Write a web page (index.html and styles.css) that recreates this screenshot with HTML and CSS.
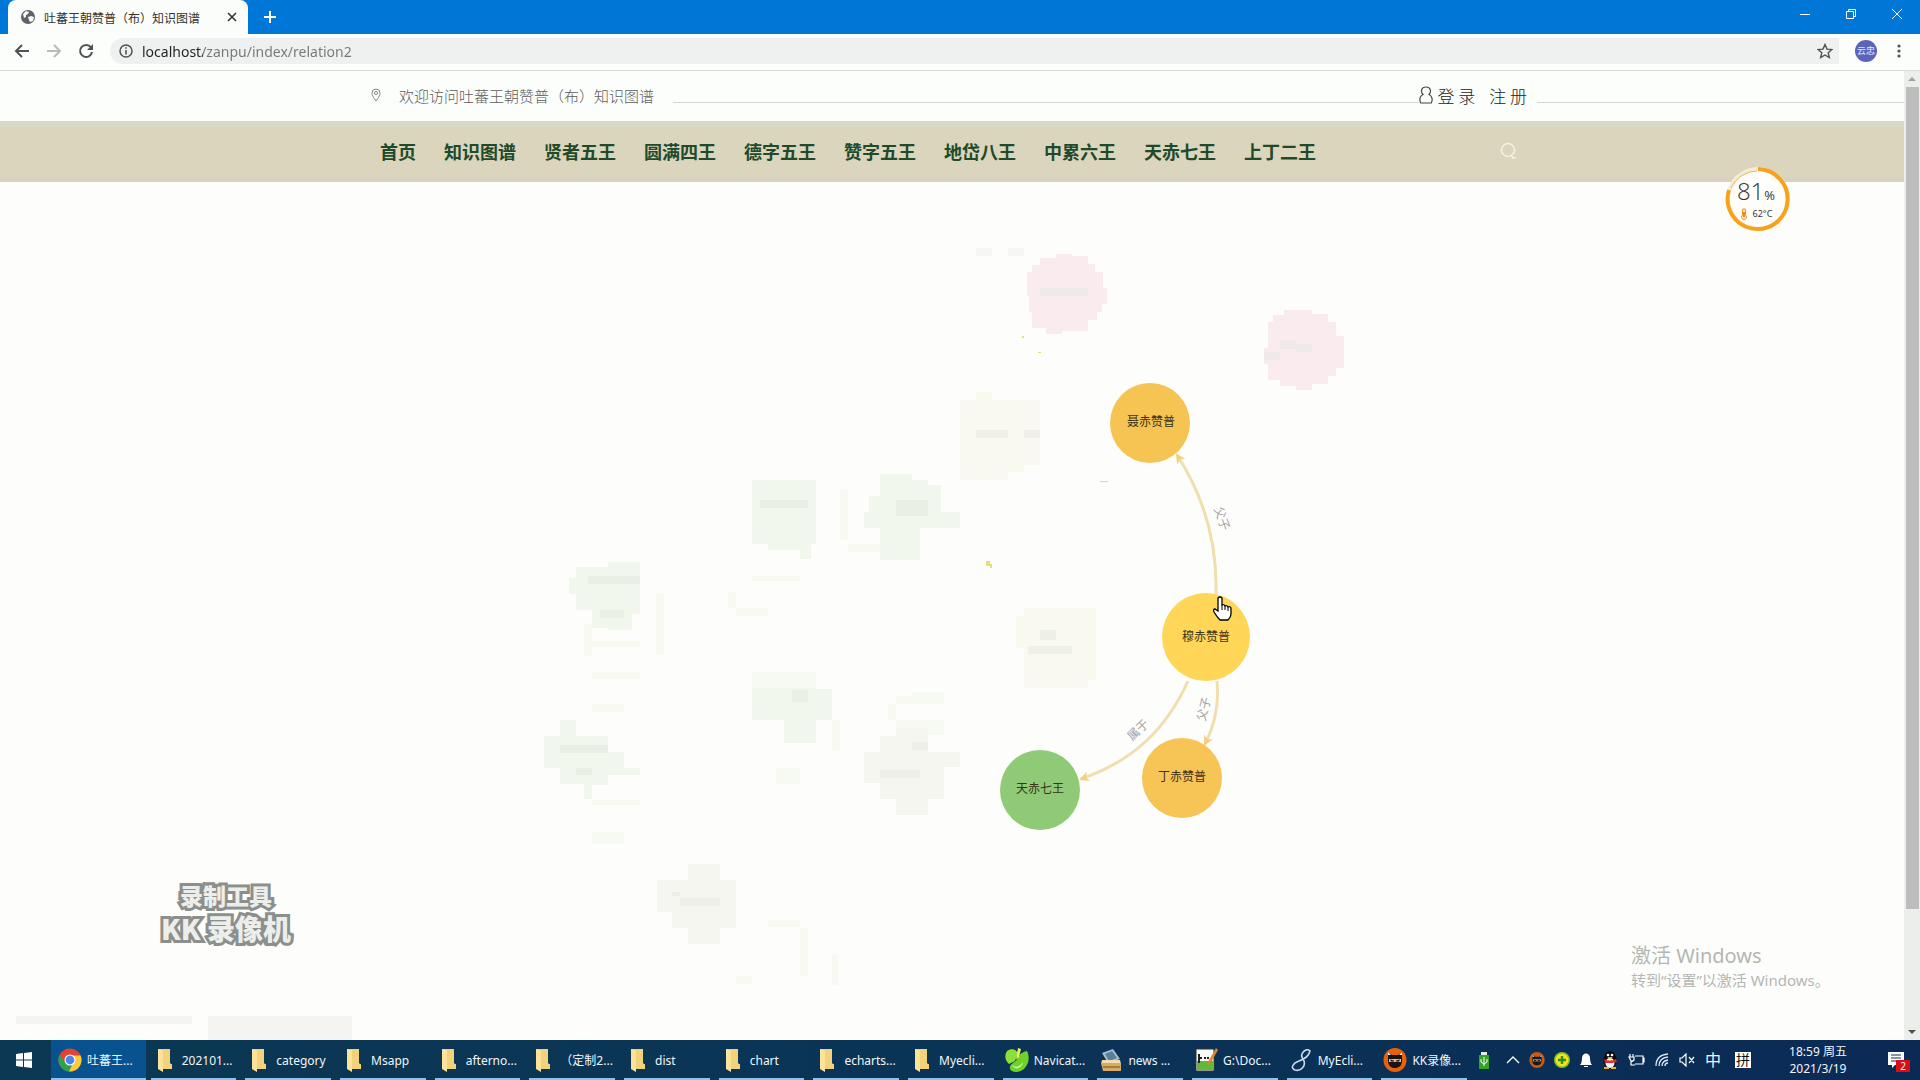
FILE: index.html
```html
<!DOCTYPE html>
<html lang="zh-CN">
<head>
<meta charset="utf-8">
<title>吐蕃王朝赞普（布）知识图谱</title>
<link rel="stylesheet" href="styles.css">
</head>
<body>
<svg class="defs" aria-hidden="true">
  <symbol id="folder" viewBox="0 0 24 24"><path d="M5 1h12v15h2v5H8l-3-2z" fill="#e9c35b"/><path d="M5 1l5 1v22l-5-3z" fill="#fbe49a"/><path d="M10 1h7v14l2 2v4h-9z" fill="#f2d27a"/></symbol>
  <symbol id="ninja" viewBox="0 0 24 24"><ellipse cx="12" cy="12" rx="11.500" ry="12" fill="#e8620c"/><path d="M5 4l4 3h6l4-3v8c0 6-3 8-7 8s-7-2-7-8z" fill="#191411"/><path d="M6 11h12v3H6z" fill="#f2b98c"/><path d="M7 11.500l4 1v1H8zM17 11.500l-4 1v1h3z" fill="#111"/><path d="M5 4l3 3H5zM19 4l-3 3h3z" fill="#fff"/></symbol>
</svg>
<div class="desktop">
  <main class="browser">
    <header class="tabstrip">
      <div class="tab">
        <svg width="16" height="16" viewBox="0 0 16 16"><circle cx="8" cy="8" r="7" fill="#5f6368"/><path d="M3 5l3-3 3 1-1 2-2 1v2l-2 1zM8 8l3-1 3 1-1 4-3 1-1-2z" fill="#fafcfa"/></svg>
        <span class="tab-title">吐蕃王朝赞普（布）知识图谱</span>
        <button class="bare" aria-label="关闭标签页"><svg width="10" height="10" viewBox="0 0 10 10"><path d="M1 1l8 8M9 1l-8 8" stroke="#333" stroke-width="1.600"/></svg></button>
      </div>
      <button class="bare new-tab" aria-label="新标签页"><svg width="14" height="14" viewBox="0 0 14 14"><path d="M7 1v12M1 7h12" stroke="#fff" stroke-width="2"/></svg></button>
      <div class="window-buttons">
        <button class="bare" aria-label="最小化"><svg width="12" height="12" viewBox="0 0 12 12"><path d="M1 6.500h10" stroke="#fff"/></svg></button>
        <button class="bare" aria-label="还原"><svg width="12" height="12" viewBox="0 0 12 12"><path d="M1.500 3.500h7v7h-7zM3.500 3.500v-2h7v7h-2" fill="none" stroke="#fff"/></svg></button>
        <button class="bare" aria-label="关闭"><svg width="12" height="12" viewBox="0 0 12 12"><path d="M1 1l10 10M11 1L1 11" stroke="#fff"/></svg></button>
      </div>
    </header>
    <div class="toolbar">
      <button class="bare" aria-label="后退"><svg width="16" height="16" viewBox="0 0 16 16"><path d="M15 8H2M8 2L2 8l6 6" fill="none" stroke="#505356" stroke-width="2"/></svg></button>
      <button class="bare" aria-label="前进"><svg width="16" height="16" viewBox="0 0 16 16"><path d="M1 8h13M8 2l6 6-6 6" fill="none" stroke="#b9bbb9" stroke-width="2"/></svg></button>
      <button class="bare" aria-label="重新加载"><svg width="16" height="16" viewBox="0 0 16 16"><path d="M13 4.500A6 6 0 1 0 14 9" fill="none" stroke="#505356" stroke-width="2"/><path d="M15 1v6H9z" fill="#505356"/></svg></button>
      <div class="omnibox">
        <svg width="16" height="16" viewBox="0 0 16 16"><circle cx="8" cy="8" r="6" fill="none" stroke="#505356" stroke-width="1.500"/><path d="M8 7v4.500M8 4.200v1.600" stroke="#505356" stroke-width="1.600"/></svg>
        <input class="url" type="text" aria-label="地址" value="localhost/zanpu/index/relation2">
        <button class="bare" aria-label="收藏"><svg width="16" height="16" viewBox="0 0 16 16"><path d="M8 1.500l2 4.600 4.900.4-3.700 3.200 1.100 4.800L8 12l-4.300 2.500 1.100-4.800L1.100 6.500 6 6.100z" fill="none" stroke="#505356" stroke-width="1.400"/></svg></button>
      </div>
      <button class="avatar" aria-label="用户">云忠</button>
      <button class="bare" aria-label="菜单"><svg width="4" height="16" viewBox="0 0 4 16"><g fill="#505356"><circle cx="2" cy="3" r="1.600"/><circle cx="2" cy="8" r="1.600"/><circle cx="2" cy="13" r="1.600"/></g></svg></button>
    </div>
    <div class="viewport">
      <div class="page">
        <div class="topbar">
          <div class="welcome">
            <svg width="10" height="14" viewBox="0 0 10 14"><path d="M5 13C2 9 1 7 1 5a4 4 0 0 1 8 0c0 2-1 4-4 8z" fill="none" stroke="#888"/><circle cx="5" cy="5" r="1.600" fill="none" stroke="#888"/></svg>
            <span>欢迎访问吐蕃王朝赞普（布）知识图谱</span>
          </div>
          <div class="rule"></div>
          <div class="account">
            <svg width="14" height="18" viewBox="0 0 14 18"><path d="M4 8.500C1.500 6 2 1 7 1s5.500 5 3 7.500c3.500 1.500 3.800 6 2.200 8.500H1.800C.2 14.500.5 10 4 8.500z" fill="none" stroke="#444" stroke-width="1.200"/></svg>
            <a href="#login">登 录</a>
            <a href="#register">注 册</a>
          </div>
          <div class="rule rule-end"></div>
        </div>
        <nav class="nav">
          <div class="nav-inner">
            <a href="#home">首页</a><a href="#kg">知识图谱</a><a href="#a">贤者五王</a><a href="#b">圆满四王</a><a href="#c">德字五王</a><a href="#d">赞字五王</a><a href="#e">地岱八王</a><a href="#f">中累六王</a><a href="#g">天赤七王</a><a href="#h">上丁二王</a>
            <button class="bare search" aria-label="搜索"><svg width="18" height="18" viewBox="0 0 18 18"><circle cx="9" cy="8" r="6.500" fill="none" stroke="#f6f2e4" stroke-width="1.400"/><path d="M12 13l2 3h3" fill="none" stroke="#f6f2e4" stroke-width="1.600"/></svg></button>
          </div>
        </nav>
        <svg class="chart" viewBox="0 182 1904 858" preserveAspectRatio="xMidYMin meet" role="img" aria-label="人物关系图">
          <defs>
            <marker id="arrow" viewBox="0 0 10 10" refX="8" refY="5" markerWidth="10" markerHeight="10" markerUnits="userSpaceOnUse" orient="auto"><path d="M0 0l10 5-10 5 3-5z" fill="#f3cf7e"/></marker>
          </defs>
          <path d="M16 1016h176v8H16zM208 1016h144v24H208z" fill="#f4f5f2"/>
          <!-- de-emphasised nodes -->
          <g class="faded-green">
            <path d="M752 480h64v64h-5v15h-11v-9h-32v-6h-16zM880 474h32v6h16v5h13v27h19v16h-40v32h-40v-32h-16v-16h5v-16h11zM608 562h32v52h-8v16h-24v-2h-16v-18h-16v-16h-7v-16h7v-11h32zM752 688h64v1h16v31h-16v23h-32v-23h-32zM560 720h16v16h32v16h16v16h16v7h-32v10h-16v14h-8v-15h-24v-16h-16v-32h16z"/>
            <path opacity=".6" d="M752 576h48v5h-48zM736 608h32v8h-32zM592 641h48v6h-48zM656 594h8v60h-8zM592 672h48v7h-48zM592 704h32v8h-32zM592 800h48v5h-48zM592 832h32v12h-32zM848 544h32v8h-32zM776 768h24v16h-24zM840 490h8v50h-8zM752 672h64v16h-64zM832 720h8v30h-8zM584 624h8v32h-8zM728 592h8v16h-8z"/>
          </g>
          <g class="faded-grey">
            <path d="M896 728h32v24h32v15h-16v32h-16v16h-32v-16h-16v-16h-16v-31h16v-16h16zM688 864h32v16h16v48h-16v16h-32v-16h-16v-16h-15v-32h31z"/>
            <path opacity=".7" d="M896 696h16v-4h32v12h-48zM888 704h8v16h-8zM768 920h32v7h-32zM800 928h8v48h-8zM736 976h16v8h-16zM832 954h6v31h-6zM896 720h48v15h-48z"/>
          </g>
          <path class="faded-beige" d="M976 392h16v8h48v65h-16v7h-16v8h-48v-80h16zM1024 608h72v72h-8v8h-64v-40h-8v-32h8z"/>
          <path class="faded-pink" d="M1056 254h16v2h16v8h7v8h8v16h4v16h-5v8h-5v8h-9v11h-26v3h-16v-6h-14v-16h-3v-16h-2v-24h5v-7h8v-7h16zM1296 310h16v4h16v8h8v14h8v32h-8v8h-8v8h-16v6h-16v-4h-16v-6h-12v-16h-4v-16h4v-26h5v-7h11v-5h12z"/>
          <g class="faded-label">
            <path d="M1040 288h48v8h-48zM1280 340h16v4h16v8h-16v-3h-16zM1264 352h16v8h-16zM768 500h40v8h-48v-8zM896 500h32v16h-32zM588 576h52v8h-52zM600 610h24v8h-24zM792 690h16v12h-16zM560 745h48v8h-48zM576 768h16v7h-16zM880 770h40v8h-40zM912 742h16v8h-16zM680 898h40v8h-40zM672 892h8v4h-8zM976 430h32v8h-32zM1024 430h16v8h-16zM1040 630h16v10h-16zM1028 646h44v8h-44z"/>
          </g>
          <path d="M976 248h16v8h-16zM1008 248h16v8h-16z" fill="#f7f6f4"/>
          <g fill="#e9dc72"><path d="M986 561h4v3h2v4h-2v-2h-4zM1100 481h8v1h-8zM1022 336h2v2h-2zM1038 352h3v1h-3z"/></g>
          <!-- relations -->
          <g class="edges">
            <path d="M1216 594Q1218 518 1177 455" marker-end="url(#arrow)"/>
            <path d="M1188 681C1165 732 1130 762 1081 779" marker-end="url(#arrow)"/>
            <path d="M1217 681Q1220 715 1205 744" marker-end="url(#arrow)"/>
          </g>
          <g class="edge-labels">
            <text transform="translate(1218 520) rotate(70)">父子</text>
            <text transform="translate(1141 733) rotate(-44)">属于</text>
            <text transform="translate(1208 710) rotate(-76)">父子</text>
          </g>
          <g class="nodes">
            <circle cx="1150" cy="423" r="40" fill="#f6c453"/><text x="1151" y="426">聂赤赞普</text>
            <circle cx="1206" cy="637" r="44" fill="#ffd658"/><text x="1206" y="641">穆赤赞普</text>
            <circle cx="1182" cy="778" r="40" fill="#f7c456"/><text x="1182" y="781">丁赤赞普</text>
            <circle cx="1040" cy="790" r="40" fill="#8fca76"/><text x="1040" y="793">天赤七王</text>
          </g>
        </svg>
      </div>
      <div class="scrollbar" aria-hidden="true">
        <svg width="8" height="16" viewBox="0 0 8 16"><path d="M0 10l4-4 4 4z" fill="#a0a3a0"/></svg>
        <div class="thumb"></div>
        <svg width="8" height="16" viewBox="0 0 8 16"><path d="M0 6l4 4 4-4z" fill="#505050"/></svg>
      </div>
    </div>
  </main>
  <footer class="taskbar">
    <button class="bare start" aria-label="开始"><svg width="16" height="16" viewBox="0 0 16 16"><path d="M0 2l7-1v6.500H0zM8 1l8-1v7.500H8zM0 8.500h7V15l-7-1zM8 8.500h8V16l-8-1z" fill="#fff"/></svg></button>
    <div class="tasks">
      <button class="task active"><svg viewBox="0 0 24 24"><circle cx="12" cy="12" r="11.500" fill="#e24335"/><path d="M1.500 7A11.500 11.500 0 0 0 11 23.500L16 14l-4 3-5-3z" fill="#2ba24c"/><path d="M11 23.500A11.500 11.500 0 0 0 22.600 7.500H12l4.500 4.500z" fill="#fbcb3a"/><circle cx="12" cy="12" r="5.500" fill="#fff"/><circle cx="12" cy="12" r="4.400" fill="#4a86ee"/></svg><span>吐蕃王...</span></button>
      <button class="task"><svg viewBox="0 0 24 24"><use href="#folder"/></svg><span>202101...</span></button>
      <button class="task"><svg viewBox="0 0 24 24"><use href="#folder"/></svg><span>category</span></button>
      <button class="task"><svg viewBox="0 0 24 24"><use href="#folder"/></svg><span>Msapp</span></button>
      <button class="task"><svg viewBox="0 0 24 24"><use href="#folder"/></svg><span>afterno...</span></button>
      <button class="task"><svg viewBox="0 0 24 24"><use href="#folder"/></svg><span>（定制2...</span></button>
      <button class="task"><svg viewBox="0 0 24 24"><use href="#folder"/></svg><span>dist</span></button>
      <button class="task"><svg viewBox="0 0 24 24"><use href="#folder"/></svg><span>chart</span></button>
      <button class="task"><svg viewBox="0 0 24 24"><use href="#folder"/></svg><span>echarts...</span></button>
      <button class="task"><svg viewBox="0 0 24 24"><use href="#folder"/></svg><span>Myecli...</span></button>
      <button class="task"><svg viewBox="0 0 24 24"><path d="M2 3C6 0 11 1 13 5l-3 8-6 3C-1 12 0 6 2 3z" fill="#8be03a"/><path d="M12 12c2-5 4-8 10-9 3 6 2 13-3 18-5 4-12 4-14 0-1-4 3-6 7-9z" fill="#6dd32a"/><path d="M13 0l3 1-2 8-3 3z" fill="#f2ee5a"/><path d="M7 17c3 3 8 2 11-3-1 6-8 9-11 3z" fill="#d5f9b0"/></svg><span>Navicat...</span></button>
      <button class="task"><svg viewBox="0 0 24 24"><path d="M3 5l11-4 7 10-12 4z" fill="#a9bfcc"/><path d="M6 6l7-3 5 7-8 3z" fill="#587f9b"/><path d="M3 12h18l1 4H2z" fill="#f2dcb0"/><path d="M2 15h20v8H4z" fill="#d6ab67"/><path d="M4 18h17v2H4z" fill="#a87b3d"/></svg><span>news ...</span></button>
      <button class="task"><svg viewBox="0 0 24 24"><path d="M2 1h18v22H2z" fill="#f8faf5" stroke="#333"/><path d="M3 13h16v9H3z" fill="#5eba32"/><path d="M5 6v9M5 10h3M10 10h2M13 10h2" stroke="#222" stroke-width="2"/><path d="M22 0l2 2-8 14-3 2 1-4z" fill="#d58a2c"/></svg><span>G:\Doc...</span></button>
      <button class="task"><svg viewBox="0 0 24 24"><path d="M21 3C17-1 10 6 14 11c4 6-2 13-8 11-5-2-2-7 4-9s10-6 11-10z" fill="none" stroke="#c8daf0" stroke-width="1.600"/></svg><span>MyEcli...</span></button>
      <button class="task"><svg viewBox="0 0 24 24"><use href="#ninja"/></svg><span>KK录像...</span></button>
    </div>
    <div class="tray">
      <svg width="10" height="18" viewBox="0 0 10 18"><path d="M2 1h6v4H2z" fill="#e8ece8"/><path d="M0 4h10v14H0z" fill="#35a326"/><path d="M5 6v9M2 8v3l3 2 3-2V8" fill="none" stroke="#fff"/></svg>
      <svg width="14" height="16" viewBox="0 0 14 16"><path d="M1 11l6-6 6 6" fill="none" stroke="#fff" stroke-width="1.400"/></svg>
      <svg width="16" height="16" viewBox="0 0 24 24"><use href="#ninja" opacity=".85"/></svg>
      <svg width="16" height="16" viewBox="0 0 16 16"><circle cx="8" cy="8" r="8" fill="#7cc22b"/><circle cx="8" cy="8" r="6.500" fill="#f5e11c"/><path d="M8 4v8M4 8h8" stroke="#2c8f1c" stroke-width="2.400"/></svg>
      <svg width="14" height="16" viewBox="0 0 14 16"><path d="M1 13q2-2 2-7c0-6 8-6 8 0q0 5 2 7zM5 14h4v1H5z" fill="#fff"/></svg>
      <svg width="16" height="18" viewBox="0 0 16 18"><ellipse cx="8" cy="9" rx="6.500" ry="9" fill="#0a0a0a"/><ellipse cx="8" cy="12" rx="4.500" ry="5" fill="#fff"/><path d="M2 8q6 3 12 0l1 3-5 1H3z" fill="#e22b28"/><circle cx="6" cy="4" r="1.300" fill="#fff"/><circle cx="10" cy="4" r="1.300" fill="#fff"/><path d="M5 6h6l-3 2zM2 16h5v2H2zM9 16h5v2H9z" fill="#f3b020"/></svg>
      <svg width="18" height="14" viewBox="0 0 18 14"><path d="M8 3h8v8H8M16 5h1v4h-1M3 1v3M6 1v3M2 4h5v3q-2 2-3 1zM4 8v4h4" fill="none" stroke="#fff" stroke-width="1.200"/></svg>
      <svg width="16" height="16" viewBox="0 0 16 16"><path d="M2 14Q2 3 14 2M5 14q0-8 9-9M8 14q0-5 6-6M11 14q0-3 3-3" fill="none" stroke="#dfe8f2" stroke-width="1.300"/></svg>
      <svg width="16" height="14" viewBox="0 0 16 14"><path d="M1 5h2l4-4v12L3 9H1zM10 4l5 6M15 4l-5 6" fill="none" stroke="#fff" stroke-width="1.200"/></svg>
      <span class="ime">中</span>
      <span class="ime ime-box">拼</span>
    </div>
    <div class="clock"><span>18:59 周五</span><span>2021/3/19</span></div>
    <button class="bare notice" aria-label="通知"><svg width="16" height="18" viewBox="0 0 16 18"><path d="M0 1h16v13H7l-3 3v-3H0z" fill="#fff"/><path d="M3 4h10M3 7h10M3 10h7" stroke="#0b2c56"/></svg><span class="count">2</span></button>
  </footer>
  <div class="recorder">
    <span class="recorder-top">录制工具</span>
    <span class="recorder-name">KK 录像机</span>
  </div>
  <div class="activate"><span class="activate-title">激活 Windows</span><span>转到“设置”以激活 Windows。</span></div>
  <div class="monitor">
    <svg class="ring" width="66" height="66" viewBox="0 0 66 66"><circle cx="33" cy="33" r="32" fill="#f6ecd6"/><circle cx="33" cy="33" r="28" fill="#fffefa"/><path d="M33 3A30 30 0 1 1 4 24" fill="none" stroke="#f7a21c" stroke-width="4"/><path d="M6 22A29 29 0 0 1 32 5" fill="none" stroke="#e5b95c"/></svg>
    <div class="load">81<small>%</small></div>
    <div class="temp"><svg width="8" height="12" viewBox="0 0 8 12"><path d="M2.500 1h3v6a2.500 2.500 0 1 1-3 0z" fill="#fde3b5" stroke="#f39a1e"/><path d="M4 4v5" stroke="#f06a10" stroke-width="1.600"/></svg>62°C</div>
  </div>
  <svg class="cursor" width="20" height="26" viewBox="0 0 20 26"><path d="M6 2q2-2 4 0v7q2-1 3 1 2-1 3 1 2-1 3 1v6q0 3-3 6H8q-3-3-6-8-1-3 1-3l3 2z" fill="#fff" stroke="#000" stroke-width="1.300"/><path d="M10 9v5M13 10v4M16 11v4" stroke="#000"/></svg>
</div>
</body>
</html>
```
FILE: styles.css
```css
* { box-sizing: border-box; }
body {
  margin: 0;
  font-family: "Noto Sans", "Noto Sans CJK SC", sans-serif;
  font-size: 12px;
  color: #333;
}
a { color: inherit; text-decoration: none; }
svg { display: block; flex: none; }
button, input { font: inherit; color: inherit; }
.defs { position: absolute; width: 0; height: 0; }
.bare {
  display: flex;
  align-items: center;
  justify-content: center;
  padding: 0;
  border: 0;
  background: none;
}
.desktop {
  position: relative;
  display: flex;
  flex-direction: column;
  min-height: 100vh;
  overflow: hidden;
}
.browser { flex: 1; display: flex; flex-direction: column; background: #fcfefb; }

/* browser frame */
.tabstrip { display: flex; height: 34px; background: #0076d6; padding-left: 8px; }
.tab {
  display: flex;
  align-items: center;
  gap: 8px;
  width: 240px;
  padding: 0 11px 0 12px;
  border-radius: 8px 8px 0 0;
  background: #fbfdfa;
}
.tab-title { flex: 1; white-space: nowrap; font-family: "Noto Sans CJK SC", sans-serif; }
.new-tab { width: 44px; }
.window-buttons { display: flex; margin-left: auto; height: 28px; }
.window-buttons .bare { width: 46px; }
.toolbar {
  display: flex;
  align-items: center;
  gap: 16px;
  height: 37px;
  padding: 0 19px 2px 14px;
  border-bottom: 1px solid #d9dbd9;
}
.omnibox {
  flex: 1;
  display: flex;
  align-items: center;
  gap: 8px;
  height: 26px;
  padding: 0 6px 0 8px;
  border-radius: 13px 0 0 13px;
  background: #eef1ef;
}
.url {
  flex: 1;
  height: 24px;
  padding: 0;
  border: 0;
  outline: 0;
  font-size: 14px;
  color: transparent;
  background: linear-gradient(to right, #222 61px, #74777a 61px);
  background-clip: text;
}
.avatar {
  width: 22px;
  height: 22px;
  margin-right: 4px;
  padding: 0;
  border: 0;
  border-radius: 50%;
  background: #5b64ba;
  color: #e8e9ff;
  font-size: 9px;
  line-height: 22px;
}

/* page */
.viewport { flex: 1; display: flex; }
.page { flex: 1; display: flex; flex-direction: column; min-width: 0; }
.topbar { display: flex; align-items: center; height: 50px; padding-bottom: 2px; }
.welcome {
  display: flex;
  align-items: center;
  gap: 18px;
  margin-left: calc(50% - 581px);
  padding-right: 19px;
  font-size: 15px;
  color: #5c5c5c;
  font-family: "Noto Sans CJK SC", sans-serif;
  font-weight: 300;
}
.rule { flex: 1; height: 1px; margin-top: 14px; background: #d5d8d5; }
.account { display: flex; align-items: center; font-size: 17px; font-family: "Noto Sans CJK SC", sans-serif; font-weight: 300; color: #222; }
.account svg { margin-right: 4px; }
.account a + a { margin-left: 14px; }
.rule-end { flex: none; width: calc(50% - 585px); margin-left: 10px; }
.nav {
  height: 61px;
  background: #dbd5bd;
  border-top: 6px solid #d7d8c5;
  border-bottom: 5px solid #d8d2c3;
}
.nav-inner {
  display: flex;
  align-items: center;
  gap: 28px;
  max-width: 1170px;
  height: 48px;
  margin: 0 auto;
  padding: 0 20px 0 13px;
  font: bold 18px/26px "Noto Sans CJK SC", sans-serif;
  color: #204a2a;
}
.search { margin-left: auto; }
.chart { width: 100%; height: auto; background: #fdfefb; }
.faded-green { fill: #f1f7ed; }
.faded-grey { fill: #f4f6ef; }
.faded-beige { fill: #f9f9f0; }
.faded-pink { fill: #faebee; }
.faded-label { fill: #e4e8e0; opacity: .5; }
.edges { fill: none; stroke: #f1deae; stroke-width: 3px; }
.edge-labels, .nodes { font: 12px "Noto Sans CJK SC", sans-serif; text-anchor: middle; }
.edge-labels { fill: #a5a1a8; }
.nodes text { fill: #3b3218; }
.scrollbar {
  display: flex;
  flex-direction: column;
  align-items: center;
  width: 16px;
  background: #eceeec;
}
.scrollbar .thumb { width: 13px; flex: 0 1 822px; background: #bcbdbc; }
.scrollbar svg:last-child { margin-top: auto; }

/* taskbar */
.taskbar {
  display: flex;
  align-items: stretch;
  height: 40px;
  background: linear-gradient(to right, #0b3852, #0a3357 60%, #0a2a55);
  color: #f2f6fa;
}
.start { width: 51px; padding-left: 16px; justify-content: flex-start; }
.tasks { flex: 1; display: flex; max-width: 1420px; }
.task {
  position: relative;
  flex: 1 1 0;
  display: flex;
  align-items: center;
  gap: 5px;
  min-width: 0;
  padding: 0 0 0 7px;
  border: 0;
  background: none;
  white-space: nowrap;
}
.task svg { width: 24px; height: 24px; }
.task::after {
  content: "";
  position: absolute;
  left: 5px;
  right: 4px;
  bottom: 0;
  height: 2px;
  background: #8fc3ea;
}
.task.active { background: #07528f; }
.task.active::after { left: 0; right: 0; }
.tray { display: flex; align-items: center; gap: 9px; margin-left: auto; }
.tray svg:first-child { margin-right: 8px; }
.ime { font-size: 16px; line-height: 20px; width: 18px; text-align: center; }
.ime-box { width: 16px; height: 16px; margin-left: 4px; background: #fff; color: #111; font-size: 14px; line-height: 16px; }
.clock {
  display: flex;
  flex-direction: column;
  justify-content: center;
  align-items: center;
  width: 134px;
  padding-bottom: 1px;
  line-height: 17px;
}
.notice { position: relative; width: 35px; padding-right: 16px; justify-content: flex-end; }
.count {
  position: absolute;
  right: 10px;
  top: 20px;
  width: 14px;
  height: 12px;
  background: #d80f16;
  font-size: 10px;
  line-height: 12px;
  text-align: center;
}

/* desktop overlays */
.recorder {
  position: absolute;
  left: 161px;
  bottom: 135px;
  display: flex;
  flex-direction: column;
  align-items: center;
  font-family: "Noto Sans CJK SC", sans-serif;
  font-weight: 900;
  color: #eceeec;
  -webkit-text-stroke: 6px #8c8f8c;
  paint-order: stroke fill;
}
.recorder-top { font-size: 23px; line-height: 32px; }
.recorder-name { font-size: 28px; line-height: 34px; }
.activate {
  position: absolute;
  left: 1631px;
  bottom: 89px;
  display: flex;
  flex-direction: column;
  font-size: 15px;
  line-height: 22px;
  color: #b4b6b4;
}
.activate-title { font-size: 20px; line-height: 26px; }
.monitor {
  position: absolute;
  right: 129px;
  top: 166px;
  display: flex;
  flex-direction: column;
  align-items: center;
  width: 66px;
  height: 66px;
  padding: 12px 4px 0 0;
}
.ring { position: absolute; left: 0; top: 0; }
.load { position: relative; font: 300 24px/26px "Open Sans", sans-serif; }
.load small { font-size: 13px; font-weight: 400; }
.temp { position: relative; display: flex; align-items: center; gap: 5px; font-size: 9px; line-height: 12px; }
.cursor { position: absolute; left: 1212px; top: 596px; }
```
